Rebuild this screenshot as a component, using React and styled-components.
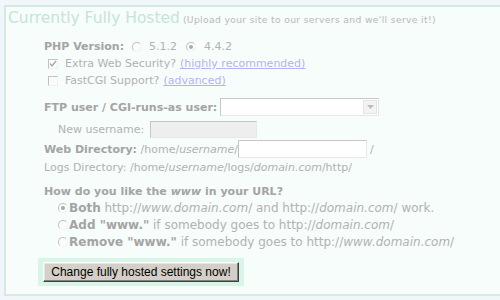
import React from "react";
import styled, { createGlobalStyle } from "styled-components";

const Global = createGlobalStyle`
  html, body { margin: 0; padding: 0; background: #f0f6f9; }
  body { font-family: "DejaVu Sans", Verdana, sans-serif; font-size: 11px; color: #b0b0b0; }
`;

const Page = styled.div`
  width: 500px;
  height: 300px;
  overflow: hidden;
  padding-top: 5px;
  box-sizing: border-box;
`;

const Box = styled.div`
  margin-left: 4px;
  border: 2px solid #d3ebe1;
  border-right: none;
  background: #f6fdfa;
  padding: 0 0 8px 0;
`;

const TitleRow = styled.div`
  display: flex;
  align-items: baseline;
  height: 20px;
  margin: 1px 0 0 2px;
  white-space: nowrap;
`;

const Title = styled.span`
  font-size: 15.5px;
  color: #c5e5d5;
  line-height: 20px;
`;

const Sub = styled.span`
  font-size: 9.2px;
  color: #b9b9b9;
  margin-left: 3px;
  letter-spacing: 0.35px;
`;

const Content = styled.div`
  margin-left: 38px;
  display: flex;
  flex-direction: column;
`;

const Row = styled.div`
  display: flex;
  align-items: center;
  height: ${(p) => p.h || 17}px;
  margin-top: ${(p) => p.mt || 0}px;
  padding-left: ${(p) => p.indent || 0}px;
  font-size: ${(p) => p.fs || 11}px;
  white-space: nowrap;
`;

const Label = styled.span`
  font-weight: bold;
  color: #a4a4a4;
  margin-right: ${(p) => p.mr || 0}px;
`;

const Txt = styled.span`
  color: #b2b2b2;
  margin-right: ${(p) => p.mr || 0}px;
`;

const Em = styled.em`
  font-style: italic;
  font-weight: ${(p) => (p.bold ? "bold" : "normal")};
`;

const Link = styled.a`
  color: #b3b3f2;
  text-decoration: underline;
  margin-left: 4px;
`;

const Radio = styled.span`
  display: inline-flex;
  align-items: center;
  justify-content: center;
  box-sizing: border-box;
  width: 10px;
  height: 10px;
  border-radius: 50%;
  border: 1px solid;
  border-color: #c0c0c0 #f2f2f2 #f2f2f2 #c0c0c0;
  background: #fbfbfb;
  margin-left: ${(p) => p.ml || 0}px;
  margin-right: ${(p) => p.mr || 0}px;
  flex-shrink: 0;
  &::after {
    content: "";
    display: ${(p) => (p.checked ? "block" : "none")};
    width: 4px;
    height: 4px;
    border-radius: 50%;
    background: #a8a8a8;
  }
`;

const Check = styled.span`
  display: inline-flex;
  align-items: center;
  justify-content: center;
  box-sizing: border-box;
  width: 10px;
  height: 10px;
  border: 1px solid;
  border-color: #c2c2c2 #f0f0f0 #f0f0f0 #c2c2c2;
  background: #fcfcfc;
  margin-left: 4px;
  margin-right: 7px;
  flex-shrink: 0;
`;

const Select = styled.div`
  box-sizing: border-box;
  width: 159px;
  height: 18px;
  border: 1px solid;
  border-color: #c8c8c8 #e6e6e6 #e6e6e6 #c8c8c8;
  background: #ffffff;
  display: flex;
  justify-content: flex-end;
  align-items: stretch;
  margin-left: 3px;
  padding: 1px;
`;

const SelBtn = styled.div`
  width: 14px;
  background: #f3f3f3;
  border: 1px solid #e4e4e4;
  box-sizing: border-box;
  display: flex;
  align-items: center;
  justify-content: center;
`;

const Input = styled.div`
  box-sizing: border-box;
  width: ${(p) => p.w}px;
  height: ${(p) => p.ht || 18}px;
  border: 1px solid;
  border-color: #c6c6c6 #e8e8e8 #e8e8e8 #c6c6c6;
  background: ${(p) => (p.disabled ? "#eeeeee" : "#ffffff")};
  margin-left: ${(p) => p.ml || 0}px;
  margin-right: ${(p) => p.mr || 0}px;
`;

const ButtonWrap = styled.div`
  align-self: flex-start;
  margin: 8px 0 0 -6px;
  padding: 4px 5px;
  background: #d7f6e8;
`;

const Button = styled.button`
  box-sizing: border-box;
  width: 196px;
  height: 20px;
  padding: 0;
  font-family: "Liberation Sans", Arial, sans-serif;
  font-size: 12px;
  color: #000;
  background: #d4d0c8;
  border: 1px solid;
  border-color: #ffffff #404040 #404040 #ffffff;
  box-shadow: inset -1px -1px 0 #808080, inset 1px 1px 0 #e8e6e0;
  display: block;
`;

export default function App() {
  return (
    <Page>
      <Global />
      <Box>
        <TitleRow>
          <Title>Currently Fully Hosted</Title>
          <Sub>(Upload your site to our servers and we'll serve it!)</Sub>
        </TitleRow>
        <Content>
          <Row mt={10}>
            <Label>PHP Version:</Label>
            <Radio ml={8} mr={7} />
            <Txt>5.1.2</Txt>
            <Radio ml={9} mr={8} checked />
            <Txt>4.4.2</Txt>
          </Row>
          <Row>
            <Check>
              <svg width="8" height="8" viewBox="0 0 8 8">
                <polyline points="1,3.5 3,6 7,1" fill="none" stroke="#a9a9a9" strokeWidth="1.4" />
              </svg>
            </Check>
            <Txt>Extra Web Security?</Txt>
            <Link>(highly recommended)</Link>
          </Row>
          <Row>
            <Check />
            <Txt>FastCGI Support?</Txt>
            <Link>(advanced)</Link>
          </Row>
          <Row h={20} mt={8}>
            <Label>FTP user / CGI-runs-as user:</Label>
            <Select>
              <SelBtn>
                <svg width="7" height="4" viewBox="0 0 7 4">
                  <polygon points="0,0 7,0 3.5,4" fill="#bdbdbd" />
                </svg>
              </SelBtn>
            </Select>
          </Row>
          <Row h={20} mt={2} indent={14}>
            <Txt>New username:</Txt>
            <Input w={107} ht={17} ml={6} disabled />
          </Row>
          <Row h={20}>
            <Label mr={0}>Web Directory: </Label>
            <Txt>
              &nbsp;/home/<Em>username</Em>/
            </Txt>
            <Input w={129} ml={0} mr={3} />
            <Txt>/</Txt>
          </Row>
          <Row h={16}>
            <Txt>
              Logs Directory: /home/<Em>username</Em>/logs/<Em>domain.com</Em>/http/
            </Txt>
          </Row>
          <Row h={16} mt={8}>
            <Label>
              How do you like the <Em bold>www</Em> in your URL?
            </Label>
          </Row>
          <Row indent={14} fs={12}>
            <Radio checked mr={1} />
            <Txt>
              <Label>Both</Label> http://<Em>www.domain.com</Em>/ and http://<Em>domain.com</Em>/ work.
            </Txt>
          </Row>
          <Row indent={14} fs={12}>
            <Radio mr={1} />
            <Txt>
              <Label>Add "www."</Label> if somebody goes to http://<Em>domain.com</Em>/
            </Txt>
          </Row>
          <Row indent={14} fs={12}>
            <Radio mr={1} />
            <Txt>
              <Label>Remove "www."</Label> if somebody goes to http://<Em>www.domain.com</Em>/
            </Txt>
          </Row>
          <ButtonWrap>
            <Button>Change fully hosted settings now!</Button>
          </ButtonWrap>
        </Content>
      </Box>
    </Page>
  );
}
